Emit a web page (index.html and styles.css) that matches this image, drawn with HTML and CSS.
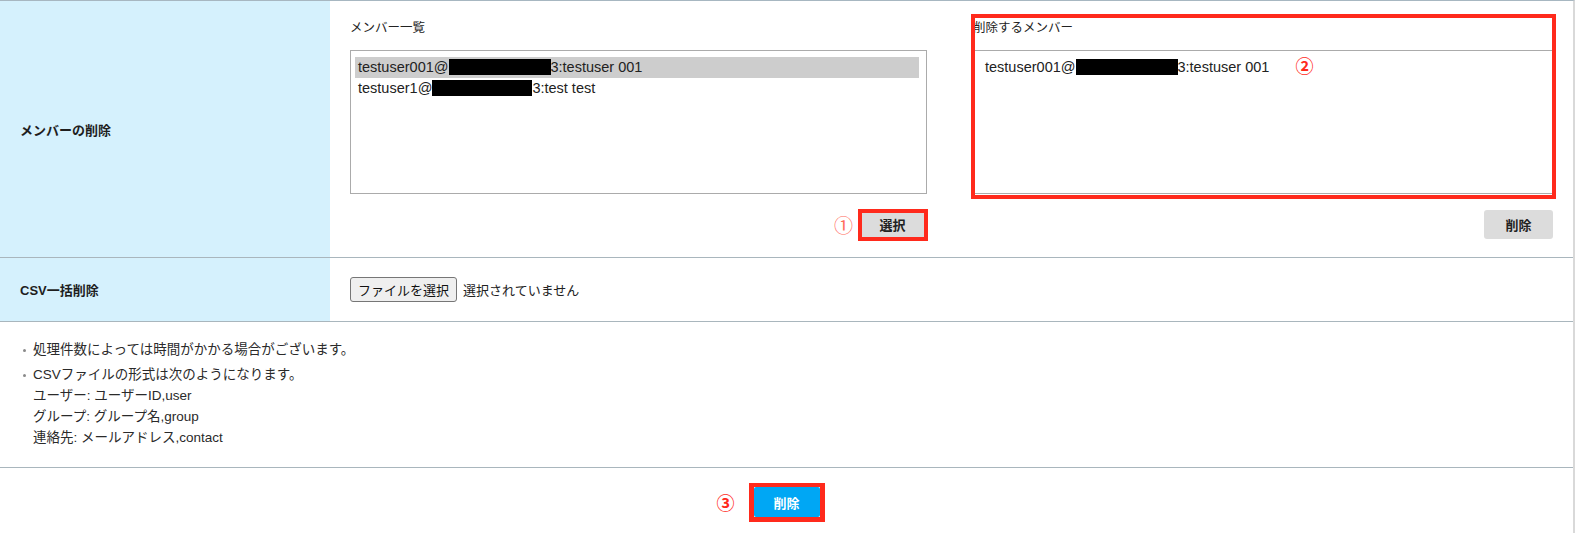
FILE: index.html
```html
<!DOCTYPE html>
<html lang="ja">
<head>
<meta charset="utf-8">
<title>メンバーの削除</title>
<link rel="stylesheet" href="styles.css">
</head>
<body>
<div class="page">
  <div class="row">
    <div class="label">メンバーの削除</div>
    <div class="content members">
      <div class="panel">
        <div class="panel-title">メンバー一覧</div>
        <div class="listbox">
          <div class="opt selected">testuser001@<span class="redact w102"></span>3:testuser 001</div>
          <div class="opt">testuser1@<span class="redact w100"></span>3:test test</div>
        </div>
        <div class="actions">
          <span class="num num-thin">①</span>
          <span class="mark mark-select"><button class="btn">選択</button></span>
        </div>
      </div>
      <div class="panel">
        <div class="mark mark-box">
          <div class="panel-title">削除するメンバー</div>
          <div class="listbox plain">
            <div class="item">testuser001@<span class="redact w102"></span>3:testuser 001<span class="num num-inline">②</span></div>
          </div>
        </div>
        <div class="actions">
          <button class="btn">削除</button>
        </div>
      </div>
    </div>
  </div>
  <div class="row">
    <div class="label">CSV一括削除</div>
    <div class="content csv">
      <span class="file-btn">ファイルを選択</span>
      <span class="file-name">選択されていません</span>
    </div>
  </div>
  <ul class="notes">
    <li>処理件数によっては時間がかかる場合がございます。</li>
    <li>CSVファイルの形式は次のようになります。<br>ユーザー: ユーザーID,user<br>グループ: グループ名,group<br>連絡先: メールアドレス,contact</li>
  </ul>
  <div class="submit">
    <span class="mark mark-primary">
      <span class="num num-side">③</span>
      <button class="btn-primary">削除</button>
    </span>
  </div>
</div>
</body>
</html>
```
FILE: styles.css
```css
html, body {
  margin: 0;
  padding: 0;
  background: #fff;
}
body {
  font-family: "Liberation Sans", "Noto Sans CJK JP", sans-serif;
  color: #222;
  font-size: 13px;
}
.page {
  width: 1575px;
  min-height: 533px;
  box-sizing: border-box;
  border-top: 1px solid #a7b7c1;
  border-right: 2px solid #d9d9d9;
}
.row {
  display: flex;
  border-bottom: 1px solid #a9b6bd;
}
.label {
  flex: none;
  width: 330px;
  box-sizing: border-box;
  padding-left: 20px;
  background: #d5f1fd;
  display: flex;
  align-items: center;
  font-weight: bold;
  font-size: 13px;
  color: #1e1e1e;
}
.content {
  flex: 1;
  padding: 17px 20px 18px;
}
.members {
  display: grid;
  grid-template-columns: 577px 580px;
  column-gap: 46px;
}
.panel-title {
  font-size: 12.5px;
  line-height: 20px;
  margin-bottom: 12px;
  color: #222;
}
.listbox {
  height: 144px;
  box-sizing: border-box;
  border: 1px solid #ababab;
  padding: 6px 7px 6px 4px;
  font-size: 14.5px;
  line-height: 21px;
  color: #222;
}
.opt {
  padding: 0 3px;
  white-space: nowrap;
}
.opt.selected {
  background: #cdcdcd;
}
.listbox.plain {
  padding: 6px 11px;
  line-height: 20px;
}
.item {
  white-space: nowrap;
}
.redact {
  display: inline-block;
  height: 16px;
  background: #000;
  vertical-align: -3px;
}
.w102 { width: 102px; }
.w100 { width: 100px; }
.actions {
  margin-top: 16px;
  display: flex;
  justify-content: flex-end;
  align-items: center;
  gap: 5px;
  height: 29px;
}
.btn {
  width: 69px;
  height: 29px;
  border: none;
  border-radius: 3px;
  background: #dcdcdc;
  font-family: "Liberation Sans", "Noto Sans CJK JP", sans-serif;
  font-weight: bold;
  font-size: 13px;
  color: #222;
  padding: 0;
  display: block;
}
.mark {
  position: relative;
  display: block;
}
.mark::after {
  content: "";
  position: absolute;
  border: 4px solid #ff2a1c;
  pointer-events: none;
}
.mark-select::after {
  top: -1px;
  left: 0;
  right: -1px;
  bottom: -2px;
}
.mark-box::after {
  top: -4px;
  left: -2px;
  right: -3px;
  bottom: -5px;
}
.num {
  color: #ff2a1c;
  font-family: "Noto Sans CJK JP", sans-serif;
  font-size: 18px;
  line-height: 20px;
}
.num-thin {
  color: #ff6a5c;
  font-weight: normal;
  font-size: 19px;
}
.num-inline {
  font-weight: bold;
  margin-left: 26px;
  font-size: 18px;
  line-height: 10px;
  vertical-align: -1px;
}
.csv {
  padding: 19px 20px;
  display: flex;
  align-items: center;
  gap: 6px;
  font-size: 13px;
}
.file-btn {
  display: inline-flex;
  align-items: center;
  height: 25px;
  box-sizing: border-box;
  padding: 0 7px;
  border: 1px solid #767676;
  border-radius: 3px;
  background: #efefef;
  color: #111;
}
.file-name {
  color: #222;
}
.notes {
  list-style: none;
  margin: 0;
  padding: 17px 20px 19px;
  border-bottom: 1px solid #a9b6bd;
  font-size: 13.5px;
  line-height: 21px;
  color: #2a2a2a;
}
.notes li {
  padding-left: 13px;
}
.notes li + li {
  margin-top: 4px;
}
.notes li::before {
  content: "";
  display: inline-block;
  width: 3px;
  height: 3px;
  background: #8a8a8a;
  border-radius: 50%;
  margin-left: -10px;
  margin-right: 7px;
  vertical-align: middle;
}
.submit {
  display: flex;
  justify-content: center;
  padding-top: 19px;
}
.mark-primary::after {
  top: -4px;
  left: -5px;
  right: -5px;
  bottom: -5px;
  border-width: 4px 5px 5px 5px;
}
.num-side {
  position: absolute;
  right: calc(100% + 19px);
  top: 50%;
  transform: translateY(-50%);
  font-weight: bold;
}
.btn-primary {
  display: block;
  width: 66px;
  height: 30px;
  border: none;
  border-radius: 2px;
  background: #00a7f4;
  color: #fff;
  font-family: "Liberation Sans", "Noto Sans CJK JP", sans-serif;
  font-weight: bold;
  font-size: 13px;
  padding: 0;
}
```
